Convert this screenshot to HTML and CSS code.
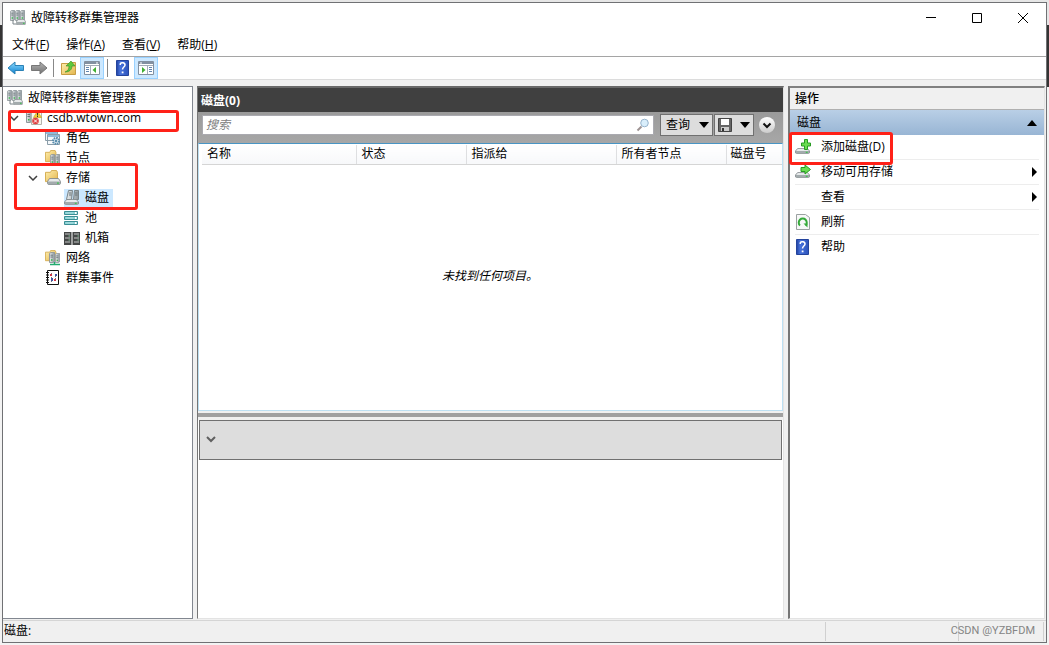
FILE: index.html
```html
<!DOCTYPE html>
<html lang="zh-CN">
<head>
<meta charset="utf-8">
<title>故障转移群集管理器</title>
<link rel="stylesheet" href="styles.css">
</head>
<body>
<svg class="sprite" aria-hidden="true">
  <defs>
    <linearGradient id="metal" x1="0" x2="1"><stop offset="0" stop-color="#eceff0"/><stop offset="1" stop-color="#8c969b"/></linearGradient>
    <linearGradient id="folder-fill" x1="0" x2="1" y1="0" y2="1"><stop offset="0" stop-color="#fff0b0"/><stop offset="1" stop-color="#e3b54c"/></linearGradient>
    <linearGradient id="blue-fill" x1="0" x2="0" y1="0" y2="1"><stop offset="0" stop-color="#8fdcff"/><stop offset="1" stop-color="#0c80cf"/></linearGradient>
    <linearGradient id="grey-fill" x1="0" x2="0" y1="0" y2="1"><stop offset="0" stop-color="#b5b5b5"/><stop offset="1" stop-color="#707070"/></linearGradient>
    <linearGradient id="help-fill" x1="0" x2="1"><stop offset="0" stop-color="#20419e"/><stop offset=".3" stop-color="#4672dc"/><stop offset="1" stop-color="#2d54bb"/></linearGradient>
    <symbol id="tower" viewBox="0 0 6 12" preserveAspectRatio="none"><path d="M.5 1.500 2 .5h3.500v10l-1.500 1H.5z" fill="url(#metal)" stroke="#8f989c"/><path d="M1.500 3.500h2.500M1.500 5.500h2.500" stroke="#6d787d"/><path d="M2 8h1.500v1.500H2z" fill="#33b948"/></symbol>
    <symbol id="drive" viewBox="0 0 16 8" preserveAspectRatio="none"><path d="M3 .5h10l2.500 3.500v2.500l-1 1h-13l-1-1V4z" fill="#e6e9ea" stroke="#7d8487"/><path d="M1 4h14v2.500l-1 .5H2l-1-.5z" fill="#a3abad"/><path d="M11.500 5h2v1.500h-2z" fill="#35c647"/></symbol>
    <symbol id="folder" viewBox="0 0 16 14" preserveAspectRatio="none"><path d="M.5 2.500h5l1-2h5l1 2v10H.5z" fill="url(#folder-fill)" stroke="#d4ac50"/></symbol>
    <symbol id="cluster" viewBox="0 0 16 16"><use href="#tower" x="0" y="0" width="5" height="11"/><use href="#tower" x="5" y="0" width="5" height="11"/><use href="#tower" x="10" y="0" width="5" height="11"/><path d="M3 10v4h4" fill="none" stroke="#7b858a"/><use href="#drive" x="6" y="9" width="10" height="6"/></symbol>
    <symbol id="cluster-alert" viewBox="0 0 16 16"><use href="#tower" x="0" y="1" width="6" height="12"/><path d="M5.500 2.500h10v12h-10z" fill="#f7f6ee" stroke="#b3b3ac"/><path d="m11.500 1 4 6.500h-8z" fill="#f7cf35" stroke="#c59a18" stroke-width=".6"/><path d="M11.500 3v2.500M11.500 6v1" stroke="#333"/><circle cx="9.500" cy="11" r="3.300" fill="#e04343"/><path d="m8 9.500 3 3m0-3-3 3" stroke="#fff"/></symbol>
    <symbol id="roles" viewBox="0 0 16 16"><path d="M.5 1.500h12v9H.5zM2.500 4.500h12v10h-12z" fill="#f4f8fb" stroke="#8b9da9"/><path d="M1 2h11v2H1zM3 5h11v2H3z" fill="#8fbbd9"/><circle cx="11" cy="11" r="3" fill="#d6e4ed" stroke="#5a8dad" stroke-width="2" stroke-dasharray="1.500 .8"/><circle cx="11" cy="11" r="1.200" fill="#5a8dad"/></symbol>
    <symbol id="nodes" viewBox="0 0 16 16"><use href="#folder" x="0" y="0" width="14" height="13"/><use href="#tower" x="5" y="4" width="5" height="11"/><use href="#tower" x="10" y="4" width="5" height="11"/></symbol>
    <symbol id="storage" viewBox="0 0 16 16"><use href="#folder" x="0" y="0" width="16" height="13"/><use href="#drive" x="2" y="8" width="14" height="7"/></symbol>
    <symbol id="disks" viewBox="0 0 16 16"><path d="M4.500.5h4l-1 9h-5zM10.500.5h4v9h-5z" fill="url(#metal)" stroke="#7b858a"/><path d="M5 3h2.500M5 5h2.500M11 3h2.500M11 5h2.500" stroke="#68757a"/><use href="#drive" x="0" y="9" width="15" height="6"/></symbol>
    <symbol id="pool" viewBox="0 0 16 16"><path d="M.5 1.500h13v3H.5zM.5 6.500h13v3H.5zM.5 11.500h13v3H.5z" fill="#8bd0d4" stroke="#3a8e95"/><path d="M2 3h7M2 8h7M2 13h7" stroke="#a8dfe0"/><path d="M11 2h1.500v2H11zM11 7h1.500v2H11zM11 12h1.500v2H11z" fill="#fff"/></symbol>
    <symbol id="chassis" viewBox="0 0 16 16"><path d="M0 2h7.500v13H0zM8.500 2H16v13H8.500z" fill="#454747"/><path d="M1 4h5M1 8h5M1 12h5M10 4h5M10 8h5M10 12h5" stroke="#9a9d9d" stroke-width="1.500"/><path d="M4.500 6H6M4.500 10H6M13.500 6H15M13.500 10H15" stroke="#84c79b"/></symbol>
    <symbol id="network" viewBox="0 0 16 16"><use href="#folder" x="0" y="0" width="14" height="12"/><use href="#tower" x="4" y="2" width="6" height="11"/><use href="#tower" x="10" y="3" width="5" height="10"/><path d="M5 14.500h10M9.500 12v3" stroke="#22ab70" stroke-width="1.500"/></symbol>
    <symbol id="events" viewBox="0 0 16 16"><path d="M2.500.5h11v14h-11z" fill="#fff" stroke="#111"/><path d="M1 2.500h3M1 5h3M1 7.500h3M1 10h3M1 12.500h3" stroke="#111"/><path d="M6.500 3v9M10.500 4v8" stroke="#777" stroke-dasharray="1 1"/><path d="M5 4h2v2H5zM9 9h2v2H9z" fill="#cf3546"/><path d="M10 4h2v2h-2zM6 8h2v3H6z" fill="#4054a5"/></symbol>
    <symbol id="help" viewBox="0 0 14 16"><path d="M.5.5h12v15H.5z" fill="url(#help-fill)" stroke="#24449d"/><path d="M4.300 5V3.800C5 2.300 9 2.300 9 5c0 2-2.500 2.100-2.500 4.500" fill="none" stroke="#fff" stroke-width="1.500"/><path d="M5.700 11.500h1.800v1.800H5.700z" fill="#fff"/></symbol>
    <symbol id="arrow" viewBox="0 0 18 14"><path d="M1 7 8 1v3.500h8.500v5H8V13z"/></symbol>
    <symbol id="up-folder" viewBox="0 0 16 16"><path d="M.5 3.500h8l1-1h5v12H.5z" fill="url(#folder-fill)" stroke="#c79d45"/><path d="M4 12c3-1 4-3 4-6H5l5-5 4 5h-3c0 4-3 6-7 6z" fill="#5dc83c" stroke="#388b27" stroke-width=".6"/></symbol>
    <symbol id="pane" viewBox="0 0 16 14"><path d="M.5.5h15v13H.5z" fill="#fff" stroke="#8390a0"/><path d="M1 1h14v2H1z" fill="#8290a1"/><path d="M12 2h2" stroke="#fff"/><path d="M1 4.500h14M6.500 5v8" stroke="#a4adb8"/><path d="M2 6.500h3M2 8.500h3M2 10.500h3" stroke="#6285af"/><path d="m12 6-3.500 3L12 12z" fill="#3fae31"/></symbol>
    <symbol id="chevron" viewBox="0 0 10 6"><path d="m1 1 4 4 4-4" fill="none" stroke="#404040" stroke-width="1.500"/></symbol>
    <symbol id="down" viewBox="0 0 10 6"><path d="M0 0h10L5 6z"/></symbol>
    <symbol id="add-disk" viewBox="0 0 16 16"><use href="#drive" x="0" y="9" width="15" height="6"/><path d="M9.500.5h3v3.500h3v3h-3v3.500h-3V7h-3V4h3z" fill="#6adc50" stroke="#279b22"/></symbol>
    <symbol id="move-disk" viewBox="0 0 16 16"><use href="#drive" x="0" y="8" width="15" height="6"/><path d="M6 3.500h4V1l5.500 4.500L10 10V7.500H6z" fill="#6adc50" stroke="#279b22"/></symbol>
    <symbol id="refresh" viewBox="0 0 14 16"><path d="M.5.5h9l4 3v12H.5z" fill="#f7f8f8" stroke="#9ba1a1"/><path d="M4 11.500a4 4 0 1 1 5.500 0" fill="none" stroke="#35aa3a" stroke-width="2"/><path d="M7.500 9.500h4v4z" fill="#35aa3a"/></symbol>
  </defs>
</svg>
<div class="window">
  <header class="titlebar">
    <svg class="icon"><use href="#cluster"/></svg>
    <h1>故障转移群集管理器</h1>
    <div class="window-controls">
      <button aria-label="最小化"><svg viewBox="0 0 12 12"><path d="M1 5.500h10"/></svg></button>
      <button aria-label="最大化"><svg viewBox="0 0 12 12"><path d="M1.500 1.500h9v9h-9z"/></svg></button>
      <button aria-label="关闭"><svg viewBox="0 0 12 12"><path d="m1 1 10 10m0-10L1 11"/></svg></button>
    </div>
  </header>
  <nav class="menubar" aria-label="菜单">
    <button>文件(<u>F</u>)</button><button>操作(<u>A</u>)</button><button>查看(<u>V</u>)</button><button>帮助(<u>H</u>)</button>
  </nav>
  <div class="toolbar">
    <button aria-label="后退"><svg class="arrow back"><use href="#arrow"/></svg></button>
    <button aria-label="前进"><svg class="arrow forward"><use href="#arrow"/></svg></button>
    <span class="divider"></span>
    <button aria-label="向上"><svg class="icon"><use href="#up-folder"/></svg></button>
    <button class="pressed" aria-label="显示控制台树"><svg class="icon"><use href="#pane"/></svg></button>
    <span class="divider"></span>
    <button aria-label="帮助"><svg class="icon"><use href="#help"/></svg></button>
    <button class="pressed" aria-label="显示操作窗格"><svg class="icon flipped"><use href="#pane"/></svg></button>
  </div>
  <main class="workspace">
    <nav class="tree" aria-label="控制台树">
      <div class="node"><svg class="icon"><use href="#cluster"/></svg><span>故障转移群集管理器</span></div>
      <ul>
        <li>
          <div class="node"><span class="twisty"><svg><use href="#chevron"/></svg></span><svg class="icon"><use href="#cluster-alert"/></svg><span>csdb.wtown.com</span></div>
          <ul>
            <li class="node"><span class="twisty"></span><svg class="icon"><use href="#roles"/></svg><span>角色</span></li>
            <li class="node"><span class="twisty"></span><svg class="icon"><use href="#nodes"/></svg><span>节点</span></li>
            <li>
              <div class="node"><span class="twisty"><svg><use href="#chevron"/></svg></span><svg class="icon"><use href="#storage"/></svg><span>存储</span></div>
              <ul>
                <li class="node"><span class="twisty"></span><span class="selected"><svg class="icon"><use href="#disks"/></svg><span>磁盘</span></span></li>
                <li class="node"><span class="twisty"></span><svg class="icon"><use href="#pool"/></svg><span>池</span></li>
                <li class="node"><span class="twisty"></span><svg class="icon"><use href="#chassis"/></svg><span>机箱</span></li>
              </ul>
            </li>
            <li class="node"><span class="twisty"></span><svg class="icon"><use href="#network"/></svg><span>网络</span></li>
            <li class="node"><span class="twisty"></span><svg class="icon"><use href="#events"/></svg><span>群集事件</span></li>
          </ul>
        </li>
      </ul>
      <span class="mark mark-cluster"></span>
      <span class="mark mark-storage"></span>
    </nav>
    <section class="content">
      <h2>磁盘(0)</h2>
      <div class="filter">
        <label class="search"><input type="text" placeholder="搜索" aria-label="搜索"><svg viewBox="0 0 14 14"><path d="m1.500 12.500 4-4" stroke="#9d9292" stroke-width="2"/><circle cx="8.500" cy="5" r="3.800" fill="#d9eefb" stroke="#96b3cc"/></svg></label>
        <button class="combo query"><span>查询</span><svg class="down"><use href="#down"/></svg></button>
        <button class="combo save" aria-label="保存查询"><svg class="floppy" viewBox="0 0 14 14"><path d="M.5.5h13v13h-13z" fill="#666" stroke="#444"/><path d="M3 1h8v6H3z" fill="#fff"/><path d="M3 9h8v4H3z" fill="#ccc"/><path d="M4 10h2v3H4z" fill="#333"/></svg><svg class="down"><use href="#down"/></svg></button>
        <button class="expand" aria-label="展开"><svg viewBox="0 0 10 7"><path d="m1.500 1.500 3.500 3.500 3.500-3.500"/></svg></button>
      </div>
      <div class="list">
        <table>
          <colgroup><col class="name"><col class="state"><col class="assigned"><col class="owner"><col></colgroup>
          <thead><tr><th>名称</th><th>状态</th><th>指派给</th><th>所有者节点</th><th>磁盘号</th></tr></thead>
        </table>
        <p>未找到任何项目。</p>
      </div>
      <div class="splitter"></div>
      <div class="details"><button aria-label="折叠"><svg viewBox="0 0 10 7"><path d="m1 1 4 4 4-4"/></svg></button></div>
    </section>
    <aside class="actions">
      <h2>操作</h2>
      <h3>磁盘<svg viewBox="0 0 10 6"><path d="M0 6h10L5 0z"/></svg></h3>
      <ul>
        <li><button><svg class="icon"><use href="#add-disk"/></svg><span>添加磁盘(D)</span></button></li>
        <li><button><svg class="icon"><use href="#move-disk"/></svg><span>移动可用存储</span><svg class="more" viewBox="0 0 5 10"><path d="M0 0v10l5-5z"/></svg></button></li>
        <li><button><span class="icon"></span><span>查看</span><svg class="more" viewBox="0 0 5 10"><path d="M0 0v10l5-5z"/></svg></button></li>
        <li><button><svg class="icon"><use href="#refresh"/></svg><span>刷新</span></button></li>
        <li><button><svg class="icon"><use href="#help"/></svg><span>帮助</span></button></li>
      </ul>
      <span class="mark mark-add"></span>
    </aside>
  </main>
  <footer class="status"><span class="status-text">磁盘:</span><span class="status-cell"></span><span class="status-cell short"></span><span class="watermark">CSDN @YZBFDM</span></footer>
</div>
</body>
</html>
```

FILE: styles.css
```css
* { box-sizing: border-box; }
body {
  margin: 0;
  min-height: 100vh;
  padding: 2px;
  display: flex;
  background: linear-gradient(#e6e6e6 25px, #343434 25px, #343434 87px, #f3f3f3 87px);
  color: #000;
  font: 12px/16px "Open Sans", "Noto Sans CJK SC", sans-serif;
}
button { padding: 0; border: 0; background: none; color: inherit; font: inherit; }
h1, h2, h3, p, ul { margin: 0; padding: 0; font-size: 12px; font-weight: 400; }
ul { list-style: none; }
svg { display: block; flex: none; }
.sprite { position: absolute; width: 0; height: 0; }
.icon { width: 16px; height: 16px; flex: none; }
.window { flex: 1; display: flex; flex-direction: column; border: 1px solid #707174; background: #f0f0f0; min-width: 0; }
.titlebar { height: 29px; display: flex; align-items: center; gap: 5px; padding-left: 7px; background: #fff; }
.window-controls { margin-left: auto; display: flex; }
.window-controls button { width: 46px; height: 29px; display: grid; place-items: center; }
.window-controls svg { width: 12px; height: 12px; fill: none; stroke: #000; }
.menubar { height: 25px; display: flex; gap: 17px; align-items: center; padding: 2px 0 0 9px; border-bottom: 1px solid #a5a5a5; background: #fff; }
.toolbar { height: 23px; display: flex; align-items: center; padding-left: 1px; background: #fff; border-bottom: 1px solid #dcdcdc; }
.toolbar button { width: 23px; height: 22px; display: grid; place-items: center; }
.toolbar .pressed { width: 24px; border: 1px solid #99d1ff; background: #cce8ff; }
.arrow { width: 18px; height: 14px; }
.back { fill: url(#blue-fill); stroke: #2b81b5; }
.forward { fill: url(#grey-fill); stroke: #777; transform: scaleX(-1); }
.flipped { transform: scaleX(-1); }
.divider { width: 1px; height: 18px; margin: 0 3px; background: #888; }
.workspace { flex: 1; display: grid; grid-template-columns: 190px minmax(0, 1fr) 257px; column-gap: 4px; padding: 6px 1px 1px 0; }
.tree { position: relative; border: 1px solid #828790; border-left: 0; background: #fff; padding: 1px 0 0 4px; }
.tree ul ul { padding-left: 19px; }
.node { height: 20px; display: flex; align-items: center; gap: 5px; white-space: nowrap; }
.node > .twisty { width: 19px; margin-right: -5px; flex: none; }
.twisty svg { width: 10px; height: 6px; margin-left: 2px; }
.selected { height: 18px; display: flex; align-items: center; gap: 5px; padding-right: 4px; background: #cce8ff; }
.mark { position: absolute; border: 3px solid #ff2118; border-radius: 3px; pointer-events: none; }
.mark-cluster { left: 5px; top: 23px; width: 171px; height: 22px; }
.mark-storage { left: 11px; top: 76px; width: 124px; height: 47px; }
.content { display: flex; flex-direction: column; min-width: 0; border: 1px solid #e3e3e3; border-top: 2px solid #696969; border-left: 1px solid #767676; background: #fff; }
.content h2 { height: 24px; padding: 5px 3px; background: #404040; color: #fff; font-weight: 700; }
.filter { height: 31px; display: flex; gap: 1px; padding: 2px 8px 7px 4px; background: linear-gradient(#9a9a9a, #a7a7a7); }
.search { flex: 1; min-width: 0; height: 20px; margin: 1px 5px 0 0; padding: 0 3px; display: flex; align-items: center; border: 1px solid #aaaab0; background: #fff; }
.search input { flex: 1; min-width: 0; padding: 0; border: 0; outline: 0; background: transparent; font: italic 12px/16px "Open Sans", "Noto Sans CJK SC", sans-serif; }
.search input::placeholder { color: #808080; opacity: 1; }
.search svg { width: 14px; height: 14px; }
.combo { height: 22px; display: flex; align-items: center; justify-content: space-between; border: 1px solid #707070; background: #ddd; }
.query { width: 53px; padding: 0 3px 0 5px; }
.save { width: 40px; padding: 0 3px; }
.down { width: 10px; height: 6px; }
.floppy { width: 14px; height: 14px; }
.expand { width: 16px; height: 16px; margin: 3px 0 0 4px; border-radius: 50%; display: grid; place-items: center; background: linear-gradient(#fff, #ccc); }
.expand svg { width: 10px; height: 7px; fill: none; stroke: #111; stroke-width: 2; }
.list { flex: 268; display: flex; flex-direction: column; border: 1px solid #bde0f3; border-top-color: #4895c4; padding: 1px 0 0 3px; }
table { width: 100%; table-layout: fixed; border-collapse: collapse; }
.name { width: 154px; }
.state { width: 110px; }
.assigned { width: 150px; }
.owner { width: 110px; }
th { height: 19px; padding: 0 0 0 5px; border-right: 1px solid #dedfe1; border-bottom: 1px solid #d5d5d5; background: linear-gradient(#fff, #f7f8fa); text-align: left; font-weight: 400; white-space: nowrap; }
th:last-child { border-right: 0; padding-left: 4px; }
.list p { flex: 1; display: grid; place-items: center; padding: 0 4px 22px 0; font-style: italic; }
.splitter { height: 9px; background: #a0a0a0; border-top: 2px solid #f0f0f0; border-bottom: 3px solid #f0f0f0; }
.details { flex: 201; padding: 0 1px; }
.details button { width: 100%; height: 40px; padding-left: 6px; display: flex; align-items: center; border: 1px solid #707070; background: #ddd; }
.details svg { width: 10px; height: 7px; fill: none; stroke: #606060; stroke-width: 2; }
.actions { position: relative; border: 1px solid #e3e3e3; border-top: 2px solid #808080; border-left: 2px solid #767676; background: #fff; }
.actions h2 { height: 22px; padding: 3px 5px; background: #f0f0f0; border-bottom: 1px solid #b0b0b0; font-weight: 500; }
.actions h3 { height: 25px; display: flex; align-items: center; justify-content: space-between; padding: 0 7px; background: linear-gradient(#b9cfe6, #98b5d4); }
.actions h3 svg { width: 10px; height: 6px; }
.actions ul { padding: 0 5px; }
.actions li { border-bottom: 1px solid #ededed; }
.actions li:last-child { border: 0; }
.actions li button { width: 100%; height: 24px; display: flex; align-items: center; gap: 10px; }
.more { width: 5px; height: 10px; margin-left: auto; margin-right: 2px; }
.mark-add { left: -1px; top: 44px; width: 104px; height: 33px; }
.status { position: relative; height: 22px; display: flex; border-top: 1px solid #d5d5d5; }
.status-text { flex: 1; padding: 2px 1px; }
.status-cell { width: 133px; margin: 1px 0; border-left: 1px solid #d0d0d0; }
.short { width: 86px; margin-right: 2px; border-right: 1px solid #d0d0d0; }
.watermark { position: absolute; right: 11px; top: 2px; color: #858585; font: 11px/16px Roboto, sans-serif; }
```
